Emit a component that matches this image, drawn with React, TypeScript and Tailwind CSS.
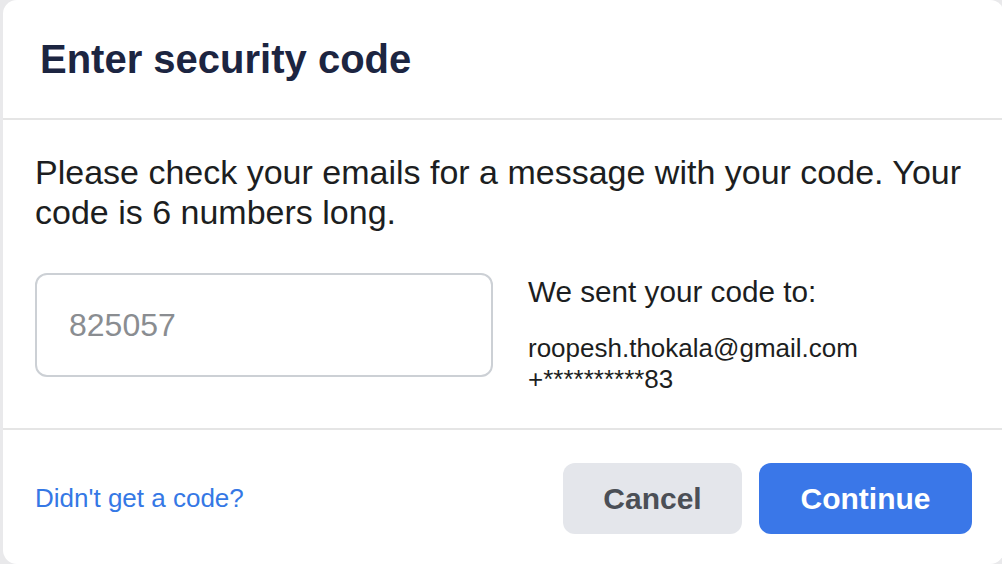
import React from 'react';

export default function App() {
  return (
    <div className="w-[1002px] h-[564px] overflow-hidden bg-[#e9e9eb] font-['Liberation_Sans',Arial,sans-serif]">
      <div className="ml-[3px] w-[1001px] h-[564px] bg-white rounded-[14px] flex flex-col">
        {/* Header */}
        <div className="h-[120px] shrink-0 flex items-center px-[37px] border-b-2 border-[#e5e5e5]">
          <h1 className="text-[40px] leading-[46px] font-bold text-[#1c2541]">Enter security code</h1>
        </div>

        {/* Body */}
        <div className="h-[310px] shrink-0 px-[32px] pt-[32px] border-b-2 border-[#e5e5e5]">
          <p className="text-[34px] leading-[40px] text-[#1c1e21] w-[940px]">
            Please check your emails for a message with your code. Your code is 6 numbers long.
          </p>
          <div className="flex gap-[35px] mt-[41px]">
            <input
              type="text"
              placeholder="825057"
              className="w-[458px] h-[104px] border-2 border-[#ccd0d5] rounded-[12px] px-[32px] text-[32px] text-[#1c1e21] placeholder:text-[#8a8d91] outline-none"
            />
            <div className="text-[#1c1e21]">
              <div className="text-[29.7px] leading-[36px] pt-[1px]">We sent your code to:</div>
              <div className="mt-[23px] text-[26px] leading-[31px]">
                <div>roopesh.thokala@gmail.com</div>
                <div>+**********83</div>
              </div>
            </div>
          </div>
        </div>

        {/* Footer */}
        <div className="flex-1 flex items-center justify-between px-[32px] pt-[2px]">
          <a href="#" className="text-[26px] text-[#3578e5]">Didn't get a code?</a>
          <div className="flex gap-[17px]">
            <button className="w-[179px] h-[71px] rounded-[12px] bg-[#e4e6eb] text-[#4b4f56] text-[30px] font-bold">
              Cancel
            </button>
            <button className="w-[213px] h-[71px] rounded-[12px] bg-[#3a77e8] text-white text-[30px] font-bold">
              Continue
            </button>
          </div>
        </div>
      </div>
    </div>
  );
}
